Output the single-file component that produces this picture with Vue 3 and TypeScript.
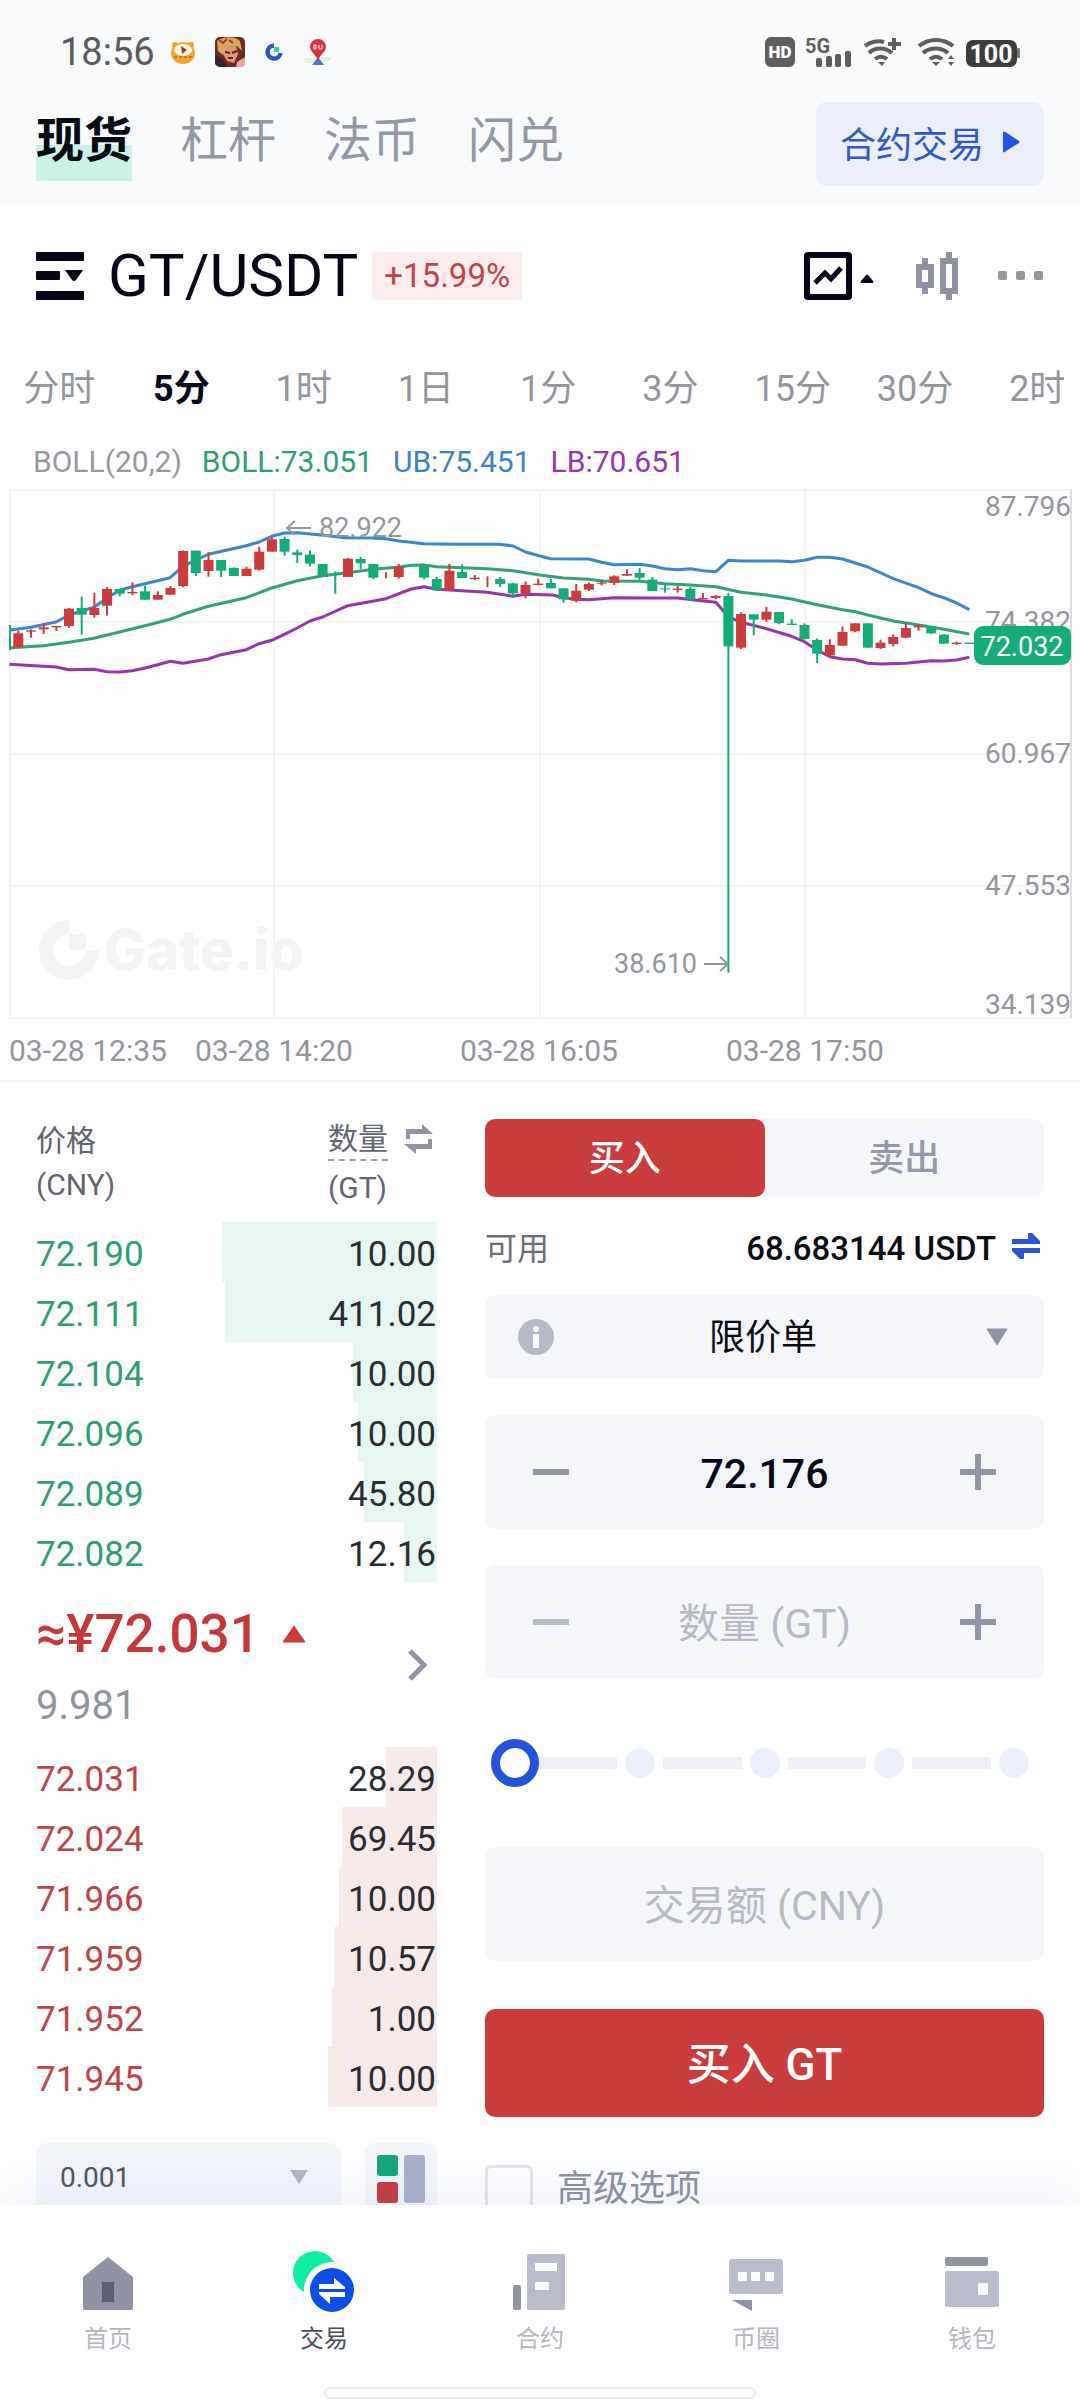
<script setup lang="ts">
import { ref } from 'vue'

interface BookRow {
  price: string
  amount: string
  depth: number
}

// [slot, rising, body top, body bottom, wick top, wick bottom]
type Candle = [number, 0 | 1, number, number, number, number]

const markets = ['现货', '杠杆', '法币', '闪兑']
const activeMarket = ref('现货')

const intervals = ['分时', '5分', '1时', '1日', '1分', '3分', '15分', '30分', '2时']
const activeInterval = ref('5分')

const price = ref('72.176')
const amount = ref('')
const total = ref('')
const percent = ref(0)
const orderType = ref('limit')
const step = ref('0.001')
const advanced = ref(false)
const side = ref('buy')

const asks: BookRow[] = [
  { price: '72.190', amount: '10.00', depth: 215 },
  { price: '72.111', amount: '411.02', depth: 212 },
  { price: '72.104', amount: '10.00', depth: 84 },
  { price: '72.096', amount: '10.00', depth: 79 },
  { price: '72.089', amount: '45.80', depth: 73 },
  { price: '72.082', amount: '12.16', depth: 33 },
]
const bids: BookRow[] = [
  { price: '72.031', amount: '28.29', depth: 51 },
  { price: '72.024', amount: '69.45', depth: 95 },
  { price: '71.966', amount: '10.00', depth: 98 },
  { price: '71.959', amount: '10.57', depth: 103 },
  { price: '71.952', amount: '1.00', depth: 105 },
  { price: '71.945', amount: '10.00', depth: 109 },
]
const BOOK_WIDTH = 401
const depthSize = (row: BookRow) => ({ backgroundSize: `${(row.depth / BOOK_WIDTH) * 100}% 100%` })

const slotX = (i: number) => 18.3 + 12.68 * i
const plotX = (v: number) => v / 2.904
const plotY = (v: number) => v / 3 - 149

const candles: Candle[] = [
  [0, 1, 880, 922, 873, 925], [1, 1, 871, 875, 868, 893], [2, 1, 862, 868, 850, 882],
  [3, 1, 858, 862, 858, 873], [4, 1, 806, 858, 804, 863], [5, 0, 804, 824, 770, 884],
  [6, 1, 804, 825, 758, 833], [7, 1, 747, 797, 741, 827], [8, 0, 747, 761, 747, 768],
  [9, 1, 756, 760, 727, 765], [10, 0, 754, 779, 737, 779], [11, 1, 765, 779, 754, 779],
  [12, 1, 744, 764, 738, 764], [13, 1, 633, 738, 631, 742], [14, 0, 632, 699, 632, 708],
  [15, 1, 660, 693, 637, 710], [16, 0, 660, 692, 660, 711], [17, 0, 684, 708, 682, 708],
  [18, 1, 686, 708, 680, 708], [19, 1, 635, 689, 620, 692], [20, 1, 598, 635, 592, 635],
  [21, 0, 597, 635, 590, 647], [22, 0, 637, 645, 629, 669], [23, 0, 644, 671, 631, 679],
  [24, 0, 672, 710, 672, 710], [25, 0, 701, 705, 694, 761], [26, 1, 656, 711, 654, 711],
  [27, 0, 657, 670, 651, 687], [28, 0, 672, 713, 672, 717], [29, 1, 709, 709, 697, 715],
  [30, 1, 680, 711, 672, 716], [31, 0, 675, 678, 672, 678], [32, 0, 676, 713, 676, 718],
  [33, 0, 717, 751, 711, 751], [34, 1, 692, 751, 672, 751], [35, 0, 696, 714, 673, 714],
  [36, 1, 713, 717, 705, 720], [37, 1, 714, 714, 709, 742], [38, 0, 717, 732, 711, 741],
  [39, 0, 730, 760, 728, 774], [40, 1, 735, 760, 724, 775], [41, 1, 731, 735, 716, 736],
  [42, 0, 729, 745, 717, 745], [43, 0, 745, 778, 745, 788], [44, 1, 752, 782, 732, 787],
  [45, 1, 732, 749, 727, 753], [46, 1, 728, 731, 718, 736], [47, 1, 709, 729, 706, 735],
  [48, 1, 702, 707, 688, 707], [49, 0, 699, 713, 684, 723], [50, 0, 719, 753, 711, 753],
  [51, 0, 745, 748, 734, 758], [52, 1, 746, 750, 738, 758], [53, 0, 747, 778, 741, 782],
  [54, 1, 774, 778, 759, 778], [55, 1, 768, 774, 765, 778], [56, 0, 768, 919, 759, 1898],
  [57, 1, 822, 923, 817, 927], [58, 0, 823, 839, 823, 886], [59, 1, 815, 839, 801, 846],
  [60, 0, 816, 849, 816, 853], [61, 0, 851, 855, 838, 855], [62, 0, 855, 897, 850, 899],
  [63, 0, 900, 941, 895, 969], [64, 1, 915, 946, 898, 950], [65, 1, 876, 917, 860, 917],
  [66, 1, 850, 874, 850, 877], [67, 0, 850, 923, 850, 923], [68, 1, 908, 924, 899, 927],
  [69, 1, 891, 912, 883, 919], [70, 1, 864, 893, 849, 895], [71, 1, 857, 862, 852, 872],
  [72, 0, 861, 880, 861, 882], [73, 0, 884, 911, 882, 911], [74, 1, 908, 912, 905, 914],
  [75, 0, 908, 912, 908, 912],
]

const upperBand = [27, 871, 90, 862, 163, 846, 200, 825, 273, 802, 311, 774, 347, 751, 384, 740, 494, 713, 531, 680, 568, 660, 605, 643, 715, 617, 752, 606, 789, 589, 826, 579, 863, 578, 940, 586, 1000, 593, 1080, 594, 1121, 596, 1158, 603, 1194, 607, 1231, 611, 1320, 613, 1450, 613, 1490, 618, 1526, 636, 1568, 648, 1599, 656, 1710, 657, 1747, 667, 1784, 674, 1858, 673, 1895, 678, 1931, 686, 1968, 689, 2005, 686, 2042, 692, 2079, 695, 2115, 661, 2152, 663, 2263, 663, 2300, 665, 2336, 661, 2373, 652, 2410, 652, 2447, 657, 2520, 681, 2594, 716, 2668, 743, 2705, 761, 2741, 773, 2778, 789, 2815, 809]
const middleBand = [27, 924, 53, 922, 126, 917, 200, 907, 273, 895, 347, 876, 421, 857, 494, 838, 531, 823, 605, 799, 715, 773, 789, 744, 863, 722, 937, 707, 1010, 698, 1084, 688, 1158, 681, 1194, 676, 1231, 675, 1268, 680, 1415, 686, 1490, 692, 1568, 705, 1636, 714, 1710, 718, 1747, 723, 1858, 724, 1931, 731, 2005, 735, 2079, 740, 2152, 757, 2226, 765, 2299, 777, 2373, 794, 2447, 809, 2484, 815, 2520, 825, 2594, 843, 2668, 855, 2741, 868, 2815, 882]
const lowerBand = [27, 973, 163, 981, 200, 989, 273, 988, 311, 995, 347, 996, 384, 992, 421, 984, 458, 974, 494, 964, 531, 970, 605, 957, 642, 944, 715, 929, 752, 911, 789, 901, 826, 883, 863, 864, 900, 843, 937, 831, 1010, 797, 1121, 776, 1194, 747, 1231, 740, 1268, 748, 1342, 752, 1415, 757, 1490, 769, 1526, 763, 1605, 765, 1636, 773, 1673, 778, 1710, 779, 1784, 773, 1895, 774, 1968, 774, 2042, 783, 2079, 787, 2115, 830, 2152, 847, 2226, 866, 2299, 889, 2336, 905, 2373, 930, 2410, 950, 2447, 957, 2484, 959, 2520, 970, 2557, 972, 2631, 970, 2704, 962, 2741, 963, 2778, 960, 2815, 952]

const toPoints = (flat: number[]) => {
  const out: string[] = []
  for (let i = 0; i < flat.length; i += 2) {
    out.push(`${plotX(flat[i]).toFixed(1)},${plotY(flat[i + 1]).toFixed(1)}`)
  }
  return out.join(' ')
}

const bands = [
  { color: '#9536b0', points: toPoints(lowerBand) },
  { color: '#35a079', points: toPoints(middleBand) },
  { color: '#3a86d0', points: toPoints(upperBand) },
]

const priceAxis = [
  { text: '87.796', y: 27 },
  { text: '74.382', y: 142 },
  { text: '60.967', y: 274 },
  { text: '47.553', y: 406 },
  { text: '34.139', y: 525 },
]
const timeAxis = [
  { text: '03-28 12:35', x: 9 },
  { text: '03-28 14:20', x: 195 },
  { text: '03-28 16:05', x: 460 },
  { text: '03-28 17:50', x: 726 },
]
</script>

<template>
  <div class="app">
    <header class="top">
      <div class="status">
        <span class="clock">18:56</span>
        <svg class="notif" width="24" height="24" viewBox="0 0 24 24">
          <circle cx="4" cy="5" r="3" fill="#f2a22c" /><circle cx="20" cy="5" r="3" fill="#f2a22c" />
          <ellipse cx="12" cy="13" rx="12" ry="11" fill="#f0a52f" />
          <ellipse cx="12" cy="10" rx="9" ry="6" fill="#fff6e6" />
          <path d="M10 6l6 4-5 4z" fill="#8a4a2a" />
          <path d="M3 17h18" stroke="#c87a1e" stroke-width="2" stroke-dasharray="3 2" />
        </svg>
        <svg class="notif" width="30" height="30" viewBox="0 0 30 30">
          <rect width="30" height="30" rx="5" fill="#6e2a20" />
          <path d="M2 4c7-5 18-5 23 0l2 10-5-5-9 1-5 8-5-4z" fill="#dca55a" />
          <path d="M10 10l11-1 2 8-4 9-7-2-4-7z" fill="#d99a76" />
          <path d="M10 15l5 1M17 16l5-2M13 21l5 0" stroke="#5c2119" stroke-width="2" />
          <path d="M4 3l4 3 4-4M14 3l4 3" stroke="#a8332a" stroke-width="2" fill="none" />
          <path d="M22 25l8-5v8l-3 2h-6z" fill="#efa59a" />
          <path d="M0 18l7 4 6 8H4l-4-3z" fill="#3a2430" />
        </svg>
        <svg class="notif" width="18" height="20" viewBox="0 0 18 20">
          <path d="M9 3.500A6.500 6.500 0 1 0 15.500 11" fill="none" stroke="#2c56c4" stroke-width="4.500" />
          <rect x="9" y="5" width="5" height="5" fill="#38cf9b" />
        </svg>
        <svg class="notif" width="30" height="28" viewBox="0 0 30 28">
          <path d="M1 20l12 0-2 5H3zM17 19l12 0-2 4-8 2z" fill="#e3f0d8" />
          <path d="M15 19l6 8H9z" fill="#4a78c8" />
          <path d="M15 1a8 8 0 0 1 8 8c0 4-5 7-8 13-3-6-8-9-8-13a8 8 0 0 1 8-8z" fill="#d9303a" />
          <path d="M11 7v4h2V7zM16 7v4h3V7" fill="none" stroke="#fff" stroke-width="1" />
        </svg>
        <span class="spacer"></span>
        <svg width="256" height="34" viewBox="0 0 256 34" class="sys">
          <rect x="0" y="2" width="30" height="30" rx="6" fill="#5f5f5f" />
          <text x="15" y="23" text-anchor="middle" font-size="17" font-weight="900" fill="#fff">HD</text>
          <text x="40" y="18" font-size="20" font-weight="700" fill="#5f5f5f">5G</text>
          <g fill="#5f5f5f">
            <rect x="51" y="23" width="6" height="9" rx="2" /><rect x="61" y="21" width="6" height="11" rx="2" />
            <rect x="70" y="19" width="6" height="13" rx="2" /><rect x="80" y="16" width="6" height="16" rx="2" />
          </g>
          <g fill="none" stroke="#5f5f5f" stroke-width="4">
            <path d="M100 11c5-4 13-6 19-4M104 18c6-6 16-6 23 0M110 24c4-3 8-3 12 0" />
            <path d="M129 3v12M123 9h13" />
            <path d="M154 11c10-8 24-8 34 0M158 18c7-6 18-6 25 0M165 24c4-3 8-3 12 0" />
          </g>
          <path d="M113 27h7l-3 4zM167 27h8l-4 4zM183 24l3-4 3 4zM183 27l3 4 3-4z" fill="#5f5f5f" />
          <rect x="201" y="5" width="51" height="27" rx="7" fill="#3d3d3d" /><rect x="252" y="13" width="3" height="10" rx="1" fill="#777" />
          <text x="226" y="28" text-anchor="middle" font-size="25" font-weight="700" fill="#fff">100</text>
        </svg>
      </div>
      <nav class="markets">
        <button
          v-for="m in markets"
          :key="m"
          type="button"
          class="market"
          :class="{ active: m === activeMarket }"
          @click="activeMarket = m"
        >{{ m }}</button>
        <span class="spacer"></span>
        <a class="futures" href="#futures">
          合约交易
          <svg width="18" height="24" viewBox="0 0 18 24"><path d="M1 2.500v19q0 1.500 1.500.500L17 13q1-1 0-2L2.500 1.500Q1 1 1 2.500z" fill="#2354e6" /></svg>
        </a>
      </nav>
    </header>

    <main class="body">
      <section class="pair">
        <button type="button" class="icon" aria-label="交易对列表">
          <svg width="48" height="48" viewBox="0 0 48 48" fill="#05061a">
            <rect width="48" height="9" rx="1" /><rect y="19" width="24" height="9" rx="1" /><rect y="39" width="48" height="9" rx="1" />
            <path d="M29 18h18l-7 10q-2 2-4 0z" />
          </svg>
        </button>
        <h1>GT/USDT</h1>
        <span class="change">+15.99%</span>
        <span class="spacer"></span>
        <button type="button" class="icon chart-toggle" aria-label="图表">
          <svg width="70" height="48" viewBox="0 0 70 48">
            <rect x="3" y="3" width="42" height="42" rx="1" fill="none" stroke="#05061a" stroke-width="6" />
            <path d="M11 31l10-10 6 6 10-11" fill="none" stroke="#05061a" stroke-width="5" />
            <path d="M57 29l5-6q1-1 2 0l5 6q1 2-1 2h-10q-2 0-1-2z" fill="#05061a" />
          </svg>
        </button>
        <button type="button" class="icon candle-btn" aria-label="K线">
          <svg width="42" height="48" viewBox="0 0 42 48" fill="none" stroke="#9092a4" stroke-width="6">
            <rect x="3" y="15" width="12" height="18" /><path d="M9 6v8M9 34v8" />
            <rect x="27" y="9" width="12" height="30" /><path d="M33 0v8M33 40v8" />
          </svg>
        </button>
        <button type="button" class="icon" aria-label="更多">
          <svg width="46" height="10" viewBox="0 0 46 10" fill="#93959f">
            <rect width="9" height="9" rx="2" /><rect x="18" width="9" height="9" rx="2" /><rect x="36" width="9" height="9" rx="2" />
          </svg>
        </button>
      </section>

      <div class="intervals">
        <button
          v-for="t in intervals"
          :key="t"
          type="button"
          :class="{ active: t === activeInterval }"
          @click="activeInterval = t"
        >{{ t }}</button>
      </div>

      <div class="legend">
        <span>BOLL(20,2)</span>
        <span class="mid">BOLL:73.051</span>
        <span class="ub">UB:75.451</span>
        <span class="lb">LB:70.651</span>
      </div>

      <svg class="chart" viewBox="0 0 1080 591">
        <g fill="#f3f3f4">
          <path d="M69 431v14a16 16 0 1 0 16 16h14a30 30 0 1 1-30-30z" />
          <rect x="69" y="445" width="17" height="16" />
          <text x="104" y="481" class="mark">Gate.io</text>
        </g>
        <g stroke="#f4f4f5" stroke-width="2">
          <path v-for="y in [1, 133, 265, 397, 529]" :key="y" :d="`M9 ${y}H1071`" />
          <path v-for="x in [10, 274, 540, 805]" :key="x" :d="`M${x} 0V529`" />
        </g>
        <path d="M1071 0V529" stroke="#b9bbc0" stroke-width="1" />
        <polyline
          v-for="b in bands"
          :key="b.color"
          :points="b.points"
          :stroke="b.color"
          fill="none"
          stroke-width="3"
          stroke-linejoin="round"
        />
        <path d="M10 136v25" stroke="#14ad79" stroke-width="2" />
        <g v-for="c in candles" :key="c[0]" :fill="c[1] ? '#cb3d3d' : '#14ad79'">
          <rect :x="slotX(c[0]) - 5" :y="plotY(c[2])" width="10" :height="(c[3] - c[2]) / 3" />
          <rect :x="slotX(c[0]) - 1" :y="plotY(c[4])" width="2" :height="(c[5] - c[4]) / 3" />
        </g>
        <g fill="none" stroke="#9296a0" stroke-width="2">
          <path d="M311 39H288M295 32l-8 7 8 7" />
          <path d="M704 475H727M720 468l8 7-8 7" />
        </g>
        <g class="note">
          <text x="319" y="48">82.922</text>
          <text x="614" y="484">38.610</text>
        </g>
        <g class="price-axis">
          <text v-for="p in priceAxis" :key="p.text" :x="1071" :y="p.y">{{ p.text }}</text>
        </g>
        <rect x="974" y="137" width="97" height="39" rx="9" fill="#14ad79" />
        <text x="1022" y="167" class="last">72.032</text>
        <g class="time-axis">
          <text v-for="t in timeAxis" :key="t.text" :x="t.x" y="572">{{ t.text }}</text>
        </g>
      </svg>

      <section class="trade">
        <div class="left">
          <table class="book">
            <thead>
              <tr>
                <th scope="col"><div class="col-price">价格<br />(CNY)</div></th>
                <th scope="col">
                  <div class="col-amount">
                    <div><span class="dashed">数量</span><span class="unit">(GT)</span></div>
                    <svg width="30" height="30" viewBox="0 0 30 30" fill="#9094a6">
                      <path d="M2 15V5h16V0l11 10H6v5zM28 15v10H12v5L0 20h24v-5z" />
                    </svg>
                  </div>
                </th>
              </tr>
            </thead>
            <tbody class="asks">
              <tr v-for="r in asks" :key="r.price" :style="depthSize(r)">
                <td>{{ r.price }}</td>
                <td class="qty">{{ r.amount }}</td>
              </tr>
            </tbody>
            <tbody>
              <tr>
                <td colspan="2" class="mid-cell">
                  <div class="last-price">
                    <div class="quote">
                      <div class="cny">
                        ≈¥72.031
                        <svg width="24" height="18" viewBox="0 0 24 18"><path d="M12 1l11 16H1z" fill="#cb3d3d" stroke="#cb3d3d" stroke-linejoin="round" /></svg>
                      </div>
                      <div class="usd">9.981</div>
                    </div>
                    <svg width="22" height="32" viewBox="0 0 22 32"><path d="M3 2l14 14L3 30" fill="none" stroke="#9094a6" stroke-width="5" /></svg>
                  </div>
                </td>
              </tr>
            </tbody>
            <tbody class="bids">
              <tr v-for="r in bids" :key="r.price" :style="depthSize(r)">
                <td>{{ r.price }}</td>
                <td class="qty">{{ r.amount }}</td>
              </tr>
            </tbody>
          </table>
          <div class="book-tools">
            <div class="step">
              <select v-model="step" aria-label="深度精度">
                <option>0.001</option>
              </select>
              <svg width="18" height="14" viewBox="0 0 18 14"><path d="M0 0h18l-9 14z" fill="#b2b5c3" /></svg>
            </div>
            <button type="button" class="layout" aria-label="盘口布局">
              <svg width="48" height="48" viewBox="0 0 48 48">
                <rect width="21" height="21" rx="3" fill="#14a877" /><rect y="27" width="21" height="21" rx="3" fill="#c8393e" />
                <rect x="27" width="21" height="48" rx="3" fill="#a9b0cc" />
              </svg>
            </button>
          </div>
        </div>

        <form class="right" @submit.prevent>
          <div class="sides">
            <button type="button" :class="{ active: side === 'buy' }" @click="side = 'buy'">买入</button>
            <button type="button" :class="{ active: side === 'sell' }" @click="side = 'sell'">卖出</button>
          </div>
          <div class="available">
            <span>可用</span>
            <span class="spacer"></span>
            <strong>68.683144 USDT</strong>
            <svg width="28" height="26" viewBox="0 0 28 26" fill="#2d55d8">
              <path d="M0 6h16V0h4l8 8v3H0zM28 15v5H12v6H8l-8-8v-3z" />
            </svg>
          </div>
          <div class="box type">
            <svg width="37" height="37" viewBox="0 0 37 37"><circle cx="18" cy="18" r="18" fill="#b7bac9" /><circle cx="18" cy="10" r="3" fill="#fff" /><rect x="15" y="15" width="6" height="14" rx="1" fill="#fff" /></svg>
            <select v-model="orderType" aria-label="委托类型">
              <option value="limit">限价单</option>
            </select>
            <svg width="22" height="18" viewBox="0 0 22 18"><path d="M1 1h20L11 17z" fill="#9094a6" stroke="#9094a6" stroke-linejoin="round" /></svg>
          </div>
          <div class="box field">
            <button type="button" aria-label="减少价格"><svg width="36" height="36" viewBox="0 0 36 36"><path d="M0 18h36" stroke="#9295a8" stroke-width="6" /></svg></button>
            <input v-model="price" type="text" inputmode="decimal" aria-label="价格" />
            <button type="button" aria-label="增加价格"><svg width="36" height="36" viewBox="0 0 36 36"><path d="M0 18h36M18 0v36" stroke="#9295a8" stroke-width="6" /></svg></button>
          </div>
          <div class="box field">
            <button type="button" aria-label="减少数量"><svg width="36" height="36" viewBox="0 0 36 36"><path d="M0 18h36" stroke="#b9bcc9" stroke-width="6" /></svg></button>
            <input v-model="amount" type="text" inputmode="decimal" placeholder="数量 (GT)" aria-label="数量 (GT)" />
            <button type="button" aria-label="增加数量"><svg width="36" height="36" viewBox="0 0 36 36"><path d="M0 18h36M18 0v36" stroke="#9295a8" stroke-width="6" /></svg></button>
          </div>
          <div class="slider">
            <div class="stops">
              <i class="dot hidden"></i>
              <template v-for="n in 4" :key="n"><i class="seg"></i><i class="dot"></i></template>
            </div>
            <input v-model.number="percent" type="range" min="0" max="100" aria-label="仓位比例" />
          </div>
          <div class="box field total">
            <input v-model="total" type="text" inputmode="decimal" placeholder="交易额 (CNY)" aria-label="交易额 (CNY)" />
          </div>
          <button type="submit" class="submit">买入 GT</button>
          <label class="advanced"><input v-model="advanced" type="checkbox" />高级选项</label>
        </form>
      </section>
    </main>

    <footer class="bottom">
      <nav class="tabs">
        <a href="#home">
          <svg width="60" height="62" viewBox="0 0 60 62"><path d="M5 26L30 6l25 20v31q0 2-2 2H7q-2 0-2-2z" fill="#9092a6" /><rect x="24" y="31" width="12" height="20" fill="#5c5f75" /></svg>
          首页
        </a>
        <a href="#trade" class="current">
          <svg width="62" height="62" viewBox="0 0 62 62">
            <circle cx="22" cy="22" r="22" fill="#0deea2" /><circle cx="39" cy="39" r="28" fill="#fff" /><circle cx="39" cy="39" r="22" fill="#0b4eea" />
            <path d="M26 33h15v-6l11 9v2H26zM52 41v5H37v7L26 43v-2z" fill="#fff" />
          </svg>
          交易
        </a>
        <a href="#futures">
          <svg width="60" height="62" viewBox="0 0 60 62"><rect x="3" y="34" width="8" height="25" rx="2" fill="#9092a6" /><rect x="17" y="3" width="38" height="56" rx="2" fill="#b9bccd" /><rect x="25" y="12" width="22" height="8" rx="1" fill="#fff" /><rect x="25" y="31" width="14" height="8" rx="1" fill="#fff" /></svg>
          合约
        </a>
        <a href="#social">
          <svg width="60" height="62" viewBox="0 0 60 62"><rect x="3" y="8" width="54" height="35" rx="3" fill="#b9bccd" /><g fill="#fff"><rect x="12" y="21" width="9" height="9" rx="1" /><rect x="25" y="21" width="9" height="9" rx="1" /><rect x="39" y="21" width="9" height="9" rx="1" /></g><path d="M6 49h20v11z" fill="#9092a6" /></svg>
          币圈
        </a>
        <a href="#wallet">
          <svg width="60" height="62" viewBox="0 0 60 62"><rect x="3" y="6" width="43" height="9" rx="2" fill="#9092a6" /><rect x="3" y="20" width="54" height="36" rx="2" fill="#b9bccd" /><rect x="36" y="32" width="10" height="12" rx="1" fill="#fff" /></svg>
          钱包
        </a>
      </nav>
      <div class="home-bar"></div>
    </footer>
  </div>
</template>

<style>
body {
  background: #fff;
}
</style>

<style scoped>
.app,
.app * {
  box-sizing: border-box;
}
.app {
  display: flex;
  flex-direction: column;
  height: 100vh;
  overflow: hidden;
  font-family: Roboto, "Noto Sans CJK SC", sans-serif;
  color: #05061a;
  background: #fefefe;
}
button,
input,
select {
  padding: 0;
  border: 0;
  background: none;
  font: inherit;
  color: inherit;
  outline: none;
}
select {
  appearance: none;
}
svg {
  display: block;
  flex: none;
}
a {
  text-decoration: none;
}
.spacer {
  flex: 1;
}

.top {
  flex: none;
  background: #f8fafc;
}
.status {
  display: flex;
  align-items: center;
  height: 72px;
  padding: 32px 59px 0 60px;
}
.clock {
  margin-right: 16px;
  font-size: 38px;
  line-height: 40px;
  color: #5c5c5c;
}
.notif {
  margin-right: 20px;
}
.markets {
  display: flex;
  gap: 48px;
  padding: 30px 36px 18px;
}
.market {
  height: 79px;
  padding-bottom: 1px;
  font-size: 48px;
  line-height: 72px;
  color: #9398a6;
}
.market.active {
  font-weight: 700;
  color: #060a12;
  background: linear-gradient(transparent 43px, #c9f3e6 43px);
}
.futures {
  display: flex;
  align-items: center;
  gap: 18px;
  height: 84px;
  padding: 0 24px 4px;
  border-radius: 10px;
  background: #eceffb;
  font-size: 36px;
  color: #3159cc;
}

.body {
  flex: 1;
  min-height: 0;
  overflow: hidden;
}
.pair {
  display: flex;
  align-items: center;
  height: 144px;
  padding: 0 36px;
}
.pair h1 {
  margin: 0 14px 0 24px;
  font-size: 60px;
  font-weight: 400;
  line-height: 72px;
}
.change {
  height: 48px;
  padding: 0 12px;
  border-radius: 4px;
  background: #fdeced;
  font-size: 33px;
  line-height: 48px;
  color: #bf4446;
}
.chart-toggle {
  margin-right: 42px;
}
.candle-btn {
  margin-right: 40px;
}
.intervals {
  display: flex;
  height: 80px;
  margin-left: -2px;
  padding-top: 3px;
  overflow: hidden;
}
.intervals button {
  flex: 0 0 11.3%;
  font-size: 36px;
  line-height: 77px;
  color: #93969f;
}
.intervals .active {
  font-weight: 700;
  color: #05061a;
}
.legend {
  display: flex;
  gap: 20px;
  padding: 7px 33px 0;
  font-size: 30px;
  line-height: 54px;
  color: #9699a2;
}
.legend .mid {
  color: #2f9e75;
}
.legend .ub {
  color: #3a82cc;
}
.legend .lb {
  color: #9536b0;
}
.chart {
  width: 100%;
  height: auto;
}
.mark {
  font: 800 56px Inter, sans-serif;
}
.note {
  font-size: 27px;
  fill: #9296a0;
}
.price-axis {
  font-size: 28px;
  text-anchor: end;
  fill: #93969f;
}
.last {
  font-size: 27px;
  text-anchor: middle;
  fill: #fff;
}
.time-axis {
  font-size: 30px;
  fill: #93969f;
}

.trade {
  display: grid;
  grid-template-columns: minmax(0, 401fr) minmax(0, 559fr);
  gap: 48px;
  padding: 36px 36px 0;
  border-top: 3px solid #f4f4f5;
}
.book {
  width: 100%;
  border-collapse: collapse;
  font-size: 35px;
}
.book th,
.book td {
  padding: 0;
}
.book th {
  height: 103px;
  vertical-align: top;
  font-size: 30px;
  font-weight: 400;
  text-align: left;
  color: #626572;
}
.col-price {
  line-height: 44px;
}
.col-amount {
  display: flex;
  justify-content: flex-end;
  gap: 16px;
  padding-right: 3px;
}
.col-amount svg {
  margin-top: 5px;
}
.dashed {
  display: block;
  border-bottom: 2px dashed #9a9daa;
  line-height: 40px;
}
.unit {
  display: block;
  line-height: 54px;
}
.asks td,
.bids td {
  height: 60px;
  padding-top: 6px;
  line-height: 54px;
}
.asks tr,
.bids tr {
  background-repeat: no-repeat;
  background-position: right;
}
.asks tr {
  background-image: linear-gradient(#e6f6f0, #e6f6f0);
  color: #2f9e75;
}
.bids tr {
  background-image: linear-gradient(#f9eaea, #f9eaea);
  color: #bf4446;
}
.book .qty {
  padding-right: 1px;
  text-align: right;
  color: #2a2c33;
}
.book .mid-cell {
  height: 165px;
}
.last-price {
  display: flex;
  align-items: center;
  justify-content: space-between;
  padding-right: 8px;
}
.quote {
  padding-top: 10px;
}
.cny {
  display: flex;
  align-items: center;
  gap: 22px;
  font-size: 53px;
  font-weight: 500;
  line-height: 72px;
  color: #c4383b;
}
.usd {
  font-size: 40px;
  line-height: 72px;
  color: #9094a2;
}
.book-tools {
  display: flex;
  gap: 24px;
  padding-top: 36px;
}
.step {
  display: flex;
  flex: 1;
  align-items: center;
  height: 72px;
  padding: 0 33px 4px 24px;
  border-radius: 10px;
  background: #f4f6fb;
}
.step select {
  flex: 1;
  font-size: 28px;
  color: #4f5261;
}
.layout {
  display: flex;
  align-items: center;
  justify-content: center;
  width: 72px;
  height: 72px;
  border-radius: 10px;
  background: #f4f6fb;
}

.right {
  display: flex;
  flex-direction: column;
}
.sides {
  display: grid;
  grid-template-columns: 1fr 1fr;
  height: 78px;
  border-radius: 10px;
  background: #f4f6fa;
  font-size: 36px;
  font-weight: 500;
  color: #9498a8;
}
.sides button {
  padding-bottom: 6px;
}
.sides .active {
  border-radius: 10px;
  background: #cb3d3d;
  color: #fff;
}
.available {
  display: flex;
  align-items: center;
  height: 98px;
  padding-right: 4px;
  gap: 16px;
  font-size: 32px;
  color: #6b6e79;
}
.available strong {
  padding-top: 4px;
  font-size: 33px;
  font-weight: 500;
  color: #0a0b14;
}
.box {
  display: flex;
  align-items: center;
  border-radius: 10px;
  background: #f4f6fa;
}
.type {
  height: 84px;
  margin-bottom: 36px;
  padding: 0 36px 0 33px;
}
.type select {
  flex: 1;
  min-width: 0;
  padding: 2px 15px 0 0;
  font-size: 36px;
  text-align: center;
  text-align-last: center;
  color: #0a0b14;
}
.field {
  height: 114px;
  margin-bottom: 36px;
  padding: 0 48px;
  font-size: 41px;
}
.field input {
  flex: 1;
  min-width: 0;
  height: 100%;
  padding-top: 3px;
  text-align: center;
  font-weight: 500;
}
.field input::placeholder {
  font-weight: 400;
  color: #b7bac6;
  opacity: 1;
}
.slider {
  position: relative;
  height: 48px;
  margin: 24px 6px 60px;
}
.stops {
  display: flex;
  align-items: center;
  height: 48px;
  padding: 0 9px;
}
.dot {
  flex: none;
  width: 30px;
  height: 30px;
  border-radius: 50%;
  background: #ebeffb;
}
.dot.hidden {
  visibility: hidden;
}
.seg {
  flex: 1;
  height: 12px;
  margin: 0 8px;
  background: #eef0f9;
}
.slider input {
  position: absolute;
  inset: 0;
  width: 100%;
  height: 48px;
  margin: 0;
  appearance: none;
}
.slider input::-webkit-slider-thumb {
  appearance: none;
  width: 48px;
  height: 48px;
  border: 9px solid #2454de;
  border-radius: 50%;
  background: #fff;
}
.total {
  margin-bottom: 48px;
}
.submit {
  height: 108px;
  padding-bottom: 4px;
  border-radius: 10px;
  background: #cb3d3d;
  font-size: 44px;
  font-weight: 500;
  color: #fff;
}
.advanced {
  display: flex;
  align-items: center;
  gap: 24px;
  margin-top: 46px;
  font-size: 36px;
  line-height: 52px;
  color: #8c90a2;
}
.advanced input {
  width: 48px;
  height: 48px;
  margin: 0;
  appearance: none;
  border: 3px solid #e3e7ea;
  border-radius: 6px;
}

.bottom {
  position: relative;
  flex: none;
  height: 195px;
  background: #fefefe;
  box-shadow: 0 -20px 50px rgba(130, 150, 210, 0.1);
}
.tabs {
  display: grid;
  grid-template-columns: repeat(5, 1fr);
  padding-top: 46px;
}
.tabs a {
  display: flex;
  flex-direction: column;
  align-items: center;
  gap: 8px;
  font-size: 24px;
  line-height: 36px;
  color: #b3b7c2;
}
.tabs .current {
  color: #4a4d5c;
}
.home-bar {
  width: 40%;
  height: 12px;
  margin: 30px auto 0;
  border: 2px solid #e9e9ea;
  border-radius: 6px;
}
</style>
